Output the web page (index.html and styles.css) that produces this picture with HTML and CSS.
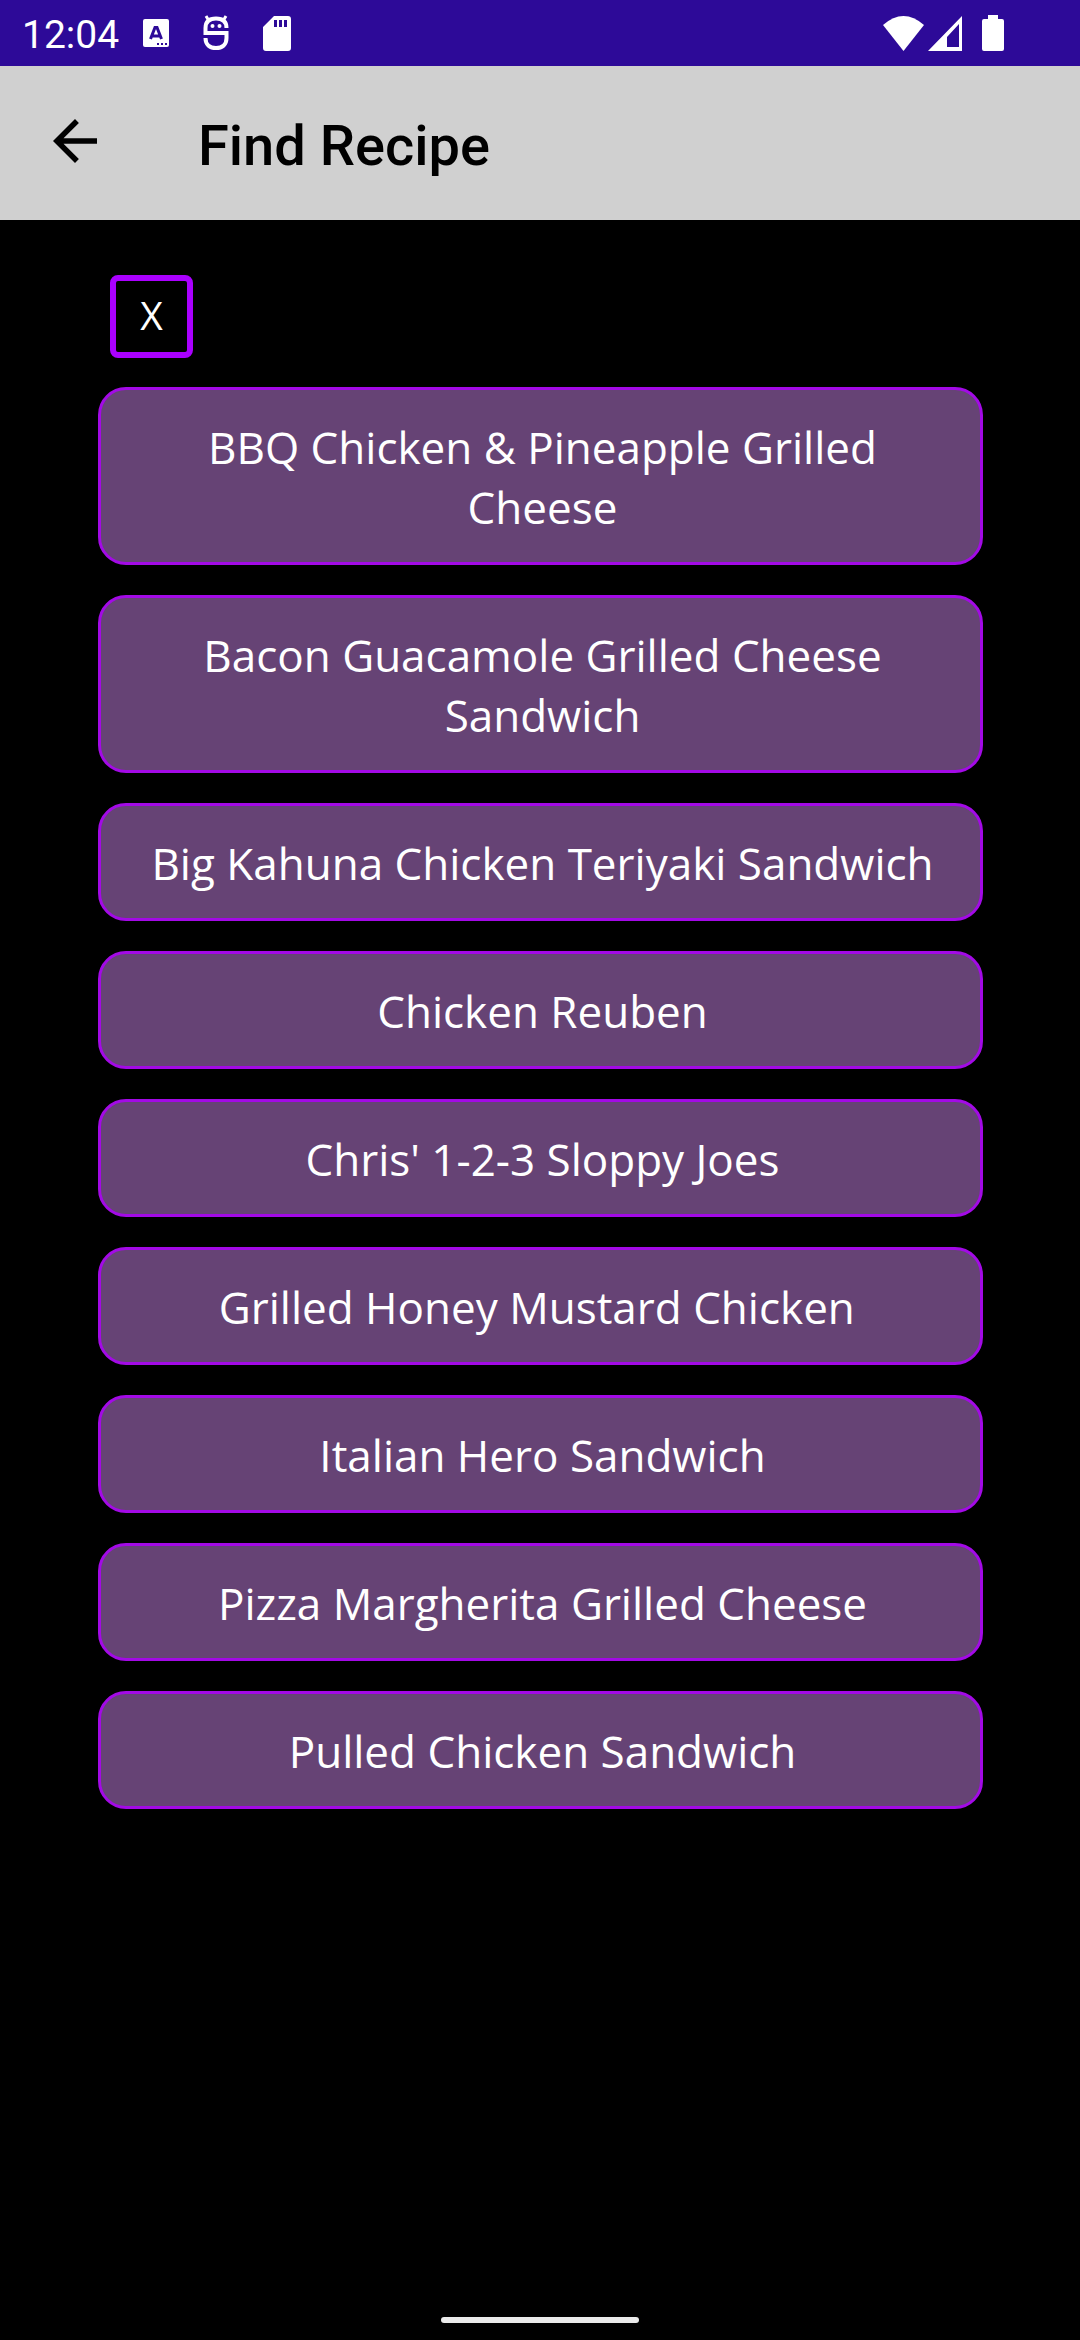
FILE: index.html
```html
<!DOCTYPE html>
<html lang="en">
<head>
<meta charset="utf-8">
<meta name="viewport" content="width=device-width, initial-scale=1">
<title>Find Recipe</title>
<link rel="stylesheet" href="styles.css">
</head>
<body>
<div class="screen">
  <div class="status-bar">
    <span class="clock">12:04</span>
    <div class="notifications">
      <svg width="26" height="28" viewBox="0 0 26 28" aria-hidden="true">
        <rect width="26" height="28" rx="2" fill="#fff"/>
        <path d="M7.500 20 12 8.500h2L18.500 20M9 17h8" fill="none" stroke="#2d0a98" stroke-width="3"/>
        <path d="M14 24h2v2h-2zM18 24h2v2h-2zM22 24h2v2h-2z" fill="#2d0a98"/>
      </svg>
      <svg width="26" height="36" viewBox="0 0 26 36" aria-hidden="true">
        <path d="M23.500 13C23.500 6 19 3.500 13 3.500S2.500 6 2.500 13V18H23.500V23C23.500 30 19 33 13 33S2.500 30 2.500 23" fill="none" stroke="#fff" stroke-width="4"/>
        <path d="M3 1 6 6M23 1 20 6" stroke="#fff" stroke-width="3"/>
        <circle cx="9.500" cy="11" r="2" fill="#fff"/><circle cx="16.500" cy="11" r="2" fill="#fff"/>
      </svg>
      <svg width="28" height="35" viewBox="0 0 28 35" aria-hidden="true">
        <path fill="#fff" fill-rule="evenodd" d="M11 0H25Q28 0 28 3V32Q28 35 25 35H3Q0 35 0 32V11ZM11 4V11H14V4ZM16 4V11H19V4ZM21 4V11H24V4Z"/>
      </svg>
    </div>
    <div class="system">
      <svg width="41" height="35" viewBox="0 0 41 35" aria-hidden="true">
        <path fill="#fff" d="M0 9Q20.500-9 41 9L20.500 35Z"/>
      </svg>
      <svg class="signal" width="34" height="35" viewBox="0 0 34 35" aria-hidden="true">
        <path fill="#fff" fill-rule="evenodd" d="M34 0V35H0ZM31 8 19 21V31H31Z"/>
      </svg>
      <svg width="22" height="36" viewBox="0 0 22 36" aria-hidden="true">
        <path fill="#fff" d="M6 0h10v4h4q2 0 2 2v28q0 2-2 2H2q-2 0-2-2V6q0-2 2-2h4z"/>
      </svg>
    </div>
  </div>
  <header class="app-bar">
    <button class="back" type="button" aria-label="Back">
      <svg width="66" height="66" viewBox="0 0 24 24" aria-hidden="true">
        <path d="M20 11H7.830l5.590-5.590L12 4l-8 8 8 8 1.410-1.410L7.830 13H20z"/>
      </svg>
    </button>
    <h1 class="title">Find Recipe</h1>
  </header>
  <main class="content">
    <button class="clear" type="button">X</button>
    <div class="recipes">
      <button class="recipe" type="button">BBQ Chicken &amp; Pineapple Grilled Cheese</button>
      <button class="recipe" type="button">Bacon Guacamole Grilled Cheese Sandwich</button>
      <button class="recipe" type="button">Big Kahuna Chicken Teriyaki Sandwich</button>
      <button class="recipe" type="button">Chicken Reuben</button>
      <button class="recipe" type="button">Chris' 1-2-3 Sloppy Joes</button>
      <button class="recipe" type="button">Grilled Honey Mustard Chicken&nbsp;</button>
      <button class="recipe" type="button">Italian Hero Sandwich</button>
      <button class="recipe" type="button">Pizza Margherita Grilled Cheese</button>
      <button class="recipe" type="button">Pulled Chicken Sandwich</button>
    </div>
  </main>
  <div class="nav-bar"><div class="handle"></div></div>
</div>
</body>
</html>
```
FILE: styles.css
```css
* {
  box-sizing: border-box;
}

body {
  margin: 0;
  background: #000;
  color: #fff;
  font-family: "Open Sans", "Noto Sans", sans-serif;
}

button {
  margin: 0;
  padding: 0;
  border: 0;
  background: none;
  color: inherit;
  font: inherit;
}

svg {
  display: block;
}

.screen {
  display: flex;
  flex-direction: column;
  min-height: 100vh;
}

.status-bar {
  display: flex;
  align-items: center;
  height: 66px;
  padding: 0 76px 0 22px;
  background: #2d0a98;
}

.clock {
  font: 400 39px/66px Roboto, sans-serif;
  padding-top: 4px;
}

.notifications {
  display: flex;
  align-items: center;
  gap: 34px;
  margin-left: 24px;
}

.system {
  display: flex;
  align-items: center;
  gap: 4px;
  margin-left: auto;
}

.signal {
  margin-right: 16px;
}

.app-bar {
  display: flex;
  align-items: center;
  height: 154px;
  padding: 0 42px;
  background: #d0d0d0;
  color: #000;
}

.back {
  margin: 0 90px 4px 0;
}

.title {
  margin: 6px 0 0;
  font: 500 56px/64px Roboto, sans-serif;
}

.content {
  flex: 1;
  padding: 55px 97px 40px 98px;
}

.clear {
  display: block;
  width: 83px;
  height: 83px;
  margin-left: 12px;
  padding-bottom: 3px;
  border: 6px solid #aa00ff;
  border-radius: 8px;
  font-size: 39px;
  line-height: 52px;
}

.recipes {
  display: flex;
  flex-direction: column;
  gap: 30px;
  margin-top: 29px;
}

.recipe {
  padding: 27px 40px 25px 44px;
  border: 3px solid #a30ae6;
  border-radius: 28px;
  background: #664375;
  font-size: 44px;
  line-height: 60px;
  text-align: center;
}

.nav-bar {
  display: flex;
  justify-content: center;
  padding-bottom: 17px;
}

.handle {
  width: 198px;
  height: 6px;
  border-radius: 3px;
  background: #eaeaea;
}
```
